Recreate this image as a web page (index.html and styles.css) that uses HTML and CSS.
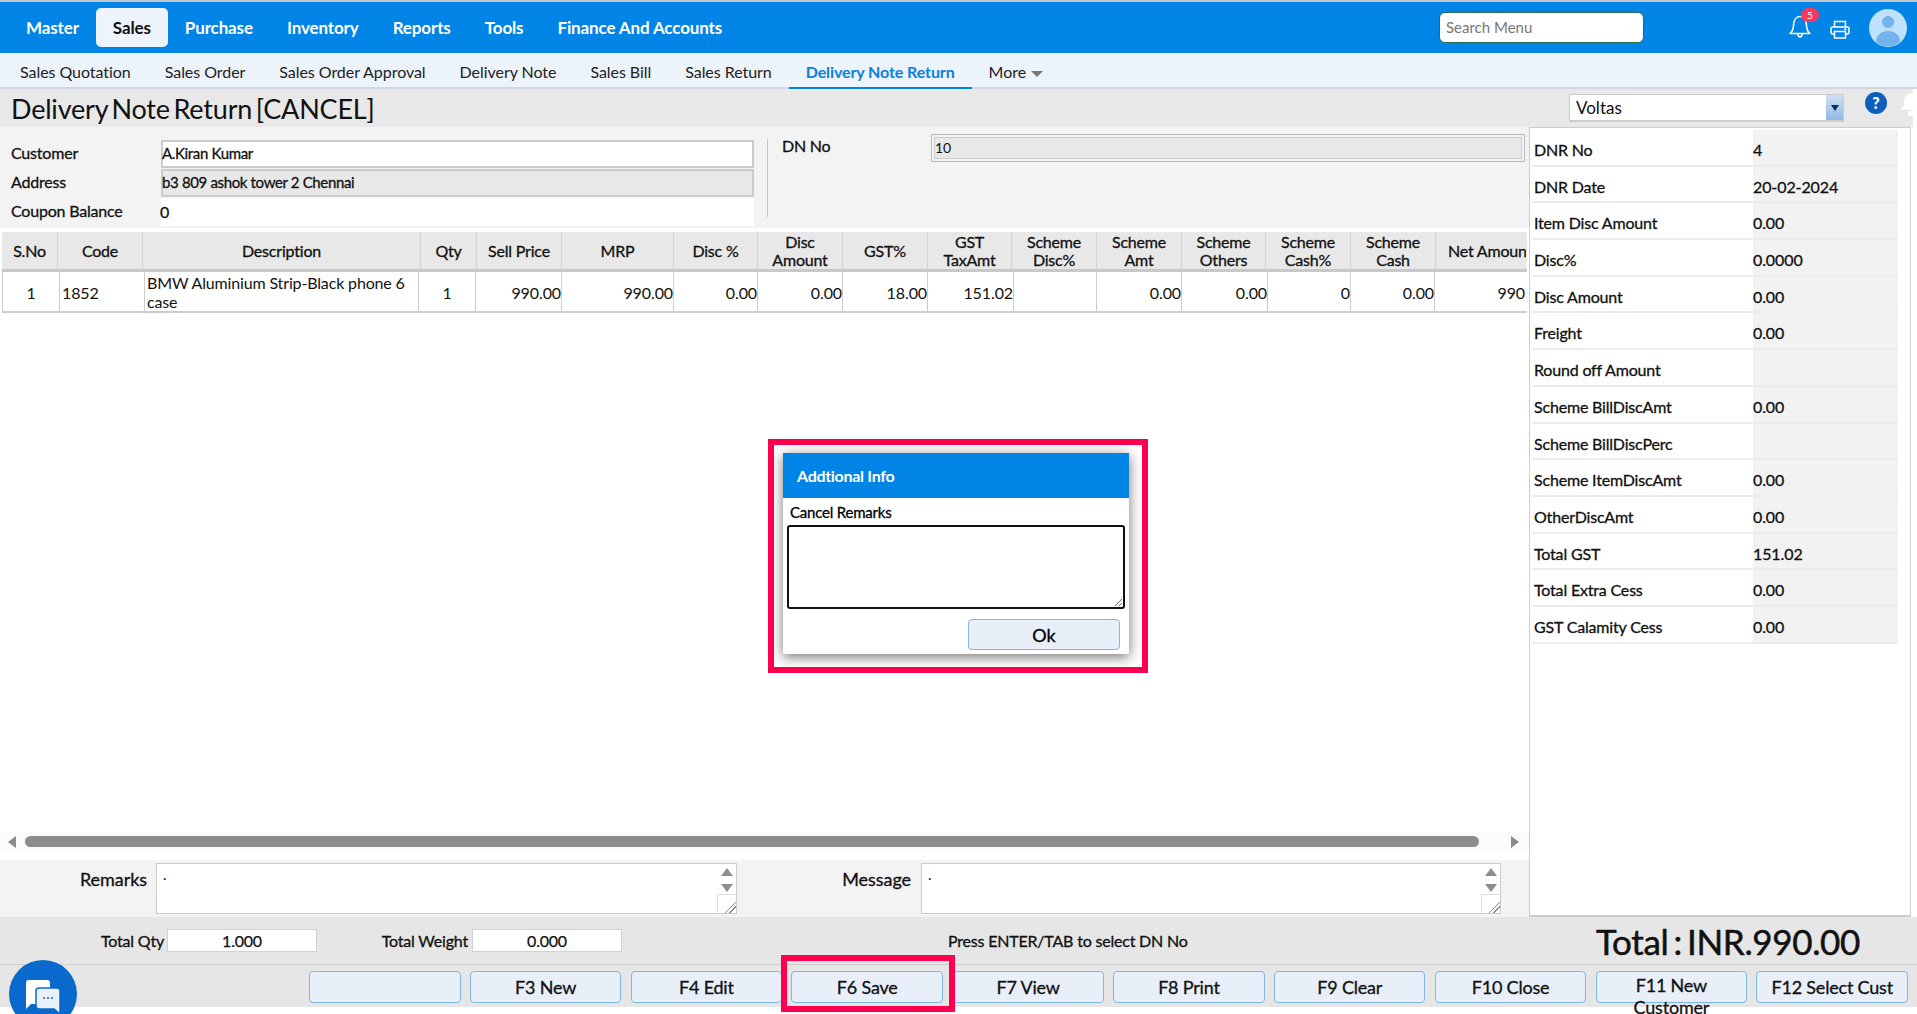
FILE: index.html
```html
<!DOCTYPE html>
<html lang="en">
<head>
<meta charset="utf-8">
<title>Delivery Note Return</title>
<link rel="stylesheet" href="styles.css">
</head>
<body>
<div class="app">
  <header class="topbar">
    <nav class="mainnav">
      <a class="mainlink">Master</a>
      <a class="mainlink mainlink-active">Sales</a>
      <a class="mainlink">Purchase</a>
      <a class="mainlink">Inventory</a>
      <a class="mainlink">Reports</a>
      <a class="mainlink">Tools</a>
      <a class="mainlink">Finance And Accounts</a>
    </nav>
    <input class="searchbox" placeholder="Search Menu">
    <div class="topicons">
      <div class="bellwrap">
        <svg class="bell" width="24" height="26" viewBox="0 0 24 26" fill="none" stroke="#fff" stroke-width="1.6"><path d="M2 20.500c2.500-2 3.300-4 3.500-8 .2-5 2.500-9 6.500-9s6.300 4 6.500 9c.2 4 1 6 3.500 8z" stroke-linejoin="round"/><path d="M9.800 20.800c.2 2.200 1.100 3.200 2.200 3.200s2-1 2.200-3.200"/></svg>
        <span class="badge">5</span>
      </div>
      <svg class="printer" width="20" height="19" viewBox="0 0 20 19" fill="none" stroke="#fff" stroke-width="1.500"><path d="M4.500 7V1.500h11V7"/><rect x="1" y="7" width="18" height="7" rx="1.500"/><rect x="4.500" y="11.500" width="11" height="6.500" fill="#0084e6"/><path d="M14 9.300h2.500"/></svg>
      <svg class="avatar" width="38" height="38" viewBox="0 0 38 38"><circle cx="19" cy="19" r="19" fill="#bfe1fb"/><circle cx="19" cy="13" r="6" fill="#74b2ee"/><path d="M7 33c0-7 5-11 12-11s12 4 12 11a19 19 0 0 1-24 0z" fill="#74b2ee"/></svg>
    </div>
  </header>

  <nav class="subnav">
    <a class="sublink">Sales Quotation</a>
    <a class="sublink">Sales Order</a>
    <a class="sublink">Sales Order Approval</a>
    <a class="sublink">Delivery Note</a>
    <a class="sublink">Sales Bill</a>
    <a class="sublink">Sales Return</a>
    <a class="sublink sublink-active">Delivery Note Return</a>
    <a class="sublink">More <span class="caret"></span></a>
  </nav>

  <div class="titlebar">
    <h1 class="pagetitle">Delivery Note Return [CANCEL]</h1>
    <div class="titletools">
      <div class="companyselect">
        <span class="companyname">Voltas</span>
        <span class="selectarrow"><span class="selecttri"></span></span>
      </div>
      <span class="helpicon">?</span>
      <svg class="ghostbell" width="20" height="24" viewBox="0 0 20 24"><path d="M0 18c3-2 4-4 4-8 0-5 3-9 8-9s8 4 8 9v8z" fill="#fff"/><path d="M8 19h8v3a4 4 0 0 1-8 0z" fill="#fff"/></svg>
    </div>
  </div>

  <div class="workspace">
    <div class="leftcol">
      <section class="formarea">
        <div class="custgrid">
          <label class="flabel">Customer</label>
          <div class="fvalue fvalue-input">A.Kiran Kumar</div>
          <label class="flabel">Address</label>
          <div class="fvalue fvalue-readonly">b3 809 ashok tower 2 Chennai</div>
          <label class="flabel">Coupon Balance</label>
          <div class="fvalue fvalue-plain">0</div>
        </div>
        <div class="dnblock">
          <label class="dnlabel">DN No</label>
          <div class="dninput">10</div>
        </div>
      </section>

      <section class="gridarea">
        <div class="gridhead">
          <div class="hc">S.No</div>
          <div class="hc">Code</div>
          <div class="hc">Description</div>
          <div class="hc">Qty</div>
          <div class="hc">Sell Price</div>
          <div class="hc">MRP</div>
          <div class="hc">Disc %</div>
          <div class="hc">Disc<br>Amount</div>
          <div class="hc">GST%</div>
          <div class="hc">GST<br>TaxAmt</div>
          <div class="hc">Scheme<br>Disc%</div>
          <div class="hc">Scheme<br>Amt</div>
          <div class="hc">Scheme<br>Others</div>
          <div class="hc">Scheme<br>Cash%</div>
          <div class="hc">Scheme<br>Cash</div>
          <div class="hc hc-clip"><span class="nowrap">Net Amount</span></div>
        </div>
        <div class="gridrow">
          <div class="dc dc-center">1</div>
          <div class="dc">1852</div>
          <div class="dc dc-desc">BMW Aluminium Strip-Black phone 6 case</div>
          <div class="dc dc-center">1</div>
          <div class="dc dc-right">990.00</div>
          <div class="dc dc-right">990.00</div>
          <div class="dc dc-right">0.00</div>
          <div class="dc dc-right">0.00</div>
          <div class="dc dc-right">18.00</div>
          <div class="dc dc-right">151.02</div>
          <div class="dc dc-right"></div>
          <div class="dc dc-right">0.00</div>
          <div class="dc dc-right">0.00</div>
          <div class="dc dc-right">0</div>
          <div class="dc dc-right">0.00</div>
          <div class="dc dc-right dc-last">990</div>
        </div>
      </section>

      <div class="hscroll">
        <span class="arrow-left"></span>
        <div class="hthumb"></div>
        <span class="arrow-right"></span>
      </div>

      <section class="notesarea">
        <label class="notelabel notelabel-remarks">Remarks</label>
        <div class="notebox notebox-remarks">
          <span class="notetext">.</span>
          <div class="notescroll">
            <span class="tri-up"></span>
            <span class="tri-down"></span>
            <span class="gripcell"></span>
          </div>
        </div>
        <label class="notelabel notelabel-message">Message</label>
        <div class="notebox notebox-message">
          <span class="notetext">.</span>
          <div class="notescroll">
            <span class="tri-up"></span>
            <span class="tri-down"></span>
            <span class="gripcell"></span>
          </div>
        </div>
      </section>
    </div>

    <aside class="sidepanel">
      <div class="sumtable">
        <div class="sumrow"><span class="sumkey">DNR No</span><span class="sumval">4</span></div>
        <div class="sumrow"><span class="sumkey">DNR Date</span><span class="sumval">20-02-2024</span></div>
        <div class="sumrow"><span class="sumkey">Item Disc Amount</span><span class="sumval">0.00</span></div>
        <div class="sumrow"><span class="sumkey">Disc%</span><span class="sumval">0.0000</span></div>
        <div class="sumrow"><span class="sumkey">Disc Amount</span><span class="sumval">0.00</span></div>
        <div class="sumrow"><span class="sumkey">Freight</span><span class="sumval">0.00</span></div>
        <div class="sumrow"><span class="sumkey">Round off Amount</span><span class="sumval"></span></div>
        <div class="sumrow"><span class="sumkey">Scheme BillDiscAmt</span><span class="sumval">0.00</span></div>
        <div class="sumrow"><span class="sumkey">Scheme BillDiscPerc</span><span class="sumval"></span></div>
        <div class="sumrow"><span class="sumkey">Scheme ItemDiscAmt</span><span class="sumval">0.00</span></div>
        <div class="sumrow"><span class="sumkey">OtherDiscAmt</span><span class="sumval">0.00</span></div>
        <div class="sumrow"><span class="sumkey">Total GST</span><span class="sumval">151.02</span></div>
        <div class="sumrow"><span class="sumkey">Total Extra Cess</span><span class="sumval">0.00</span></div>
        <div class="sumrow"><span class="sumkey">GST Calamity Cess</span><span class="sumval">0.00</span></div>
      </div>
    </aside>
  </div>

  <div class="totalsbar">
    <span class="tlabel tlabel-qty">Total Qty</span>
    <span class="tvalue">1.000</span>
    <span class="tlabel tlabel-weight">Total Weight</span>
    <span class="tvalue">0.000</span>
    <span class="hint">Press ENTER/TAB to select DN No</span>
    <span class="grandtotal">Total : INR.990.00</span>
  </div>

  <div class="actionbar">
    <button class="fbtn"></button>
    <button class="fbtn">F3 New</button>
    <button class="fbtn">F4 Edit</button>
    <button class="fbtn">F6 Save</button>
    <button class="fbtn">F7 View</button>
    <button class="fbtn">F8 Print</button>
    <button class="fbtn">F9 Clear</button>
    <button class="fbtn">F10 Close</button>
    <button class="fbtn fbtn-wrap">F11 New Customer</button>
    <button class="fbtn">F12 Select Cust</button>
  </div>

  <div class="chatbubble">
    <svg width="36" height="34" viewBox="0 0 36 34"><path d="M3 0h19a3 3 0 0 1 3 3v18a3 3 0 0 1-3 3H6l-5 5V3a3 3 0 0 1 2-3z" fill="#fff"/><path d="M14 8h18a3 3 0 0 1 3 3v17l0 6-6-5H14a3 3 0 0 1-3-3V11a3 3 0 0 1 3-3z" fill="#e9f2fb" stroke="#0a69cc" stroke-width="1.500"/><circle cx="19" cy="18" r="1" fill="#0a69cc"/><circle cx="23" cy="18" r="1" fill="#0a69cc"/><circle cx="27" cy="18" r="1" fill="#0a69cc"/></svg>
  </div>

  <div class="modalframe">
    <div class="modal">
      <div class="modalhead">Addtional Info</div>
      <div class="modalbody">
        <label class="modallabel">Cancel Remarks</label>
        <textarea class="modaltext"></textarea>
        <div class="modalfoot"><button class="okbtn">Ok</button></div>
      </div>
    </div>
  </div>

  <div class="savehighlight"></div>
</div>
</body>
</html>
```

FILE: styles.css
```css
* { box-sizing: border-box; }
html, body { margin: 0; padding: 0; background: #fff; }
body { font-family: Lato, "Open Sans", sans-serif; color: #111; font-size: 15px; }
.app { position: relative; width: 1917px; height: 1014px; overflow: hidden; display: flex; flex-direction: column; }

/* top bar */
.topbar { flex: none; height: 53px; background: #0084e6; border-top: 2px solid #c4c8cc; display: flex; align-items: center; padding-left: 9px; }
.mainnav { display: flex; align-items: center; }
.mainlink { color: #fff; font-size: 17px; font-weight: 700; padding: 0 17px; height: 39px; line-height: 39px; border-radius: 5px; letter-spacing: -0.13px; }
.mainlink-active { background: #edf4fb; color: #111; }
.searchbox { margin-left: auto; width: 205px; height: 31px; border: 1px solid #2b6b4e; border-radius: 6px; background: #fff; padding: 0 6px 2px; font: 15px Lato, sans-serif; }
.searchbox::placeholder { color: #777; opacity: 1; }
.topicons { width: 273px; display: flex; align-items: center; position: relative; height: 100%; }
.bellwrap { position: absolute; left: 144px; top: 11px; width: 24px; height: 26px; }
.bell { display: block; }
.badge { position: absolute; left: 13px; top: -5px; width: 18px; height: 14px; border-radius: 7px; background: #f53a5e; color: #fff; font-size: 10px; line-height: 14px; text-align: center; }
.printer { position: absolute; left: 186px; top: 18px; }
.avatar { position: absolute; left: 225px; top: 7px; }

/* sub nav */
.subnav { flex: none; height: 36px; background: #ecf3fb; border-bottom: 2px solid #cfd8e0; display: flex; padding-left: 3px; }
.sublink { height: 36px; line-height: 37px; padding: 0 17px; font-size: 16px; color: #222; letter-spacing: -0.05px; }
.sublink-active { color: #0a7fe0; font-weight: 700; border-bottom: 2px solid #0084e6; letter-spacing: -0.1px; line-height: 35px; padding-top: 1px; }
.caret { display: inline-block; width: 0; height: 0; border-left: 6px solid transparent; border-right: 6px solid transparent; border-top: 6px solid #777; vertical-align: middle; margin-left: 1px; }

/* title bar */
.titlebar { flex: none; height: 38px; background: #e8e8e8; display: flex; align-items: center; justify-content: space-between; padding-left: 11px; margin-right: 4px; }
.pagetitle { margin: 0; font-size: 27px; font-weight: 400; letter-spacing: -0.2px; word-spacing: -3px; color: #111; }
.titletools { display: flex; align-items: center; position: relative; width: 344px; height: 100%; }
.companyselect { width: 275px; height: 28px; background: #fff; border: 1px solid #ccc; border-bottom-width: 2px; display: flex; justify-content: space-between; }
.companyname { font-size: 17px; line-height: 25px; padding-left: 6px; }
.selectarrow { width: 17px; background: linear-gradient(#cfe0f2, #8fb9e6); display: flex; align-items: center; justify-content: center; }
.selecttri { width: 0; height: 0; border-left: 4px solid transparent; border-right: 4px solid transparent; border-top: 6px solid #0b2a6b; }
.helpicon { position: absolute; left: 296px; top: 3px; width: 22px; height: 22px; border-radius: 50%; background: #0d5fbb; color: #fff; font-weight: 900; font-size: 16px; line-height: 22px; text-align: center; }
.ghostbell { position: absolute; left: 331px; top: 3px; }

/* workspace */
.workspace { flex: none; height: 790px; display: flex; }
.leftcol { width: 1529px; display: flex; flex-direction: column; }
.formarea { flex: none; height: 101px; background: #f3f3f3; display: flex; padding: 7px 0 0 11px; }
.custgrid { width: 756px; display: grid; grid-template-columns: 150px 593px; grid-auto-rows: 29px; padding-top: 6px; }
.flabel { font-size: 16px; line-height: 25px; letter-spacing: -0.2px; -webkit-text-stroke: 0.3px currentColor; }
.fvalue { font-size: 15px; line-height: 22px; height: 28px; letter-spacing: -0.35px; -webkit-text-stroke: 0.3px currentColor; text-indent: -1px; }
.fvalue-input { background: #fff; border: 2px solid #ccc; }
.fvalue-readonly { background: #e8e8e8; border: 2px solid #ccc; }
.fvalue-plain { background: #fff; font-size: 16px; line-height: 28px; }
.dnblock { flex: 1; display: flex; border-left: 1px solid #c8c8c8; height: 78px; margin-top: 5px; }
.dnlabel { font-size: 16px; width: 163px; padding-left: 14px; line-height: 14px; letter-spacing: -0.25px; -webkit-text-stroke: 0.3px currentColor; }
.dninput { width: 594px; height: 28px; margin-top: -5px; background: #e8e8e8; border: 1px solid #bbb; box-shadow: inset 0 0 0 2px #f3f3f3, inset 0 0 0 3px #ccc; font-size: 14px; line-height: 26px; padding-left: 3px; }

/* grid */
.gridarea { flex: 1; background: #fff; padding: 4px 0 0 2px; min-height: 0; }
.gridhead, .gridrow { width: 1525px; display: grid; }
.gridhead { grid-template-columns: 56px 85px 278px 56px 85px 112px 84px 85px 85px 84px 85px 85px 84px 85px 85px 90px; height: 40px; background: #e8e8e8; border-bottom: 3px solid #c8c8c8; }
.hc { border-right: 1px solid #d2d2d2; display: flex; align-items: center; justify-content: center; text-align: center; font-size: 16px; line-height: 18px; letter-spacing: -0.2px; -webkit-text-stroke: 0.3px currentColor; min-width: 0; }
.hc:last-child { border-right: 0; }
.hc-clip { overflow: hidden; justify-content: flex-start; padding-left: 12px; }
.nowrap { white-space: nowrap; }
.gridrow { grid-template-columns: 57px 85px 274px 57px 86px 112px 84px 85px 85px 86px 83px 85px 86px 83px 84px 90px; height: 41px; border-bottom: 2px solid #ccc; border-left: 1px solid #ccc; }
.dc { border-right: 1px solid #ccc; font-size: 16px; line-height: 41px; padding: 0 1px; letter-spacing: -0.1px; min-width: 0; }
.dc:nth-child(2) { padding-left: 2px; }
.dc-center { text-align: center; }
.dc-right { text-align: right; padding-right: 0; }
.dc-desc { font-size: 16px; line-height: 19px; padding: 1px 2px 0 2px; letter-spacing: -0.15px; }
.dc-last { border-right: 0; }

/* horizontal scrollbar */
.hscroll { flex: none; height: 19px; margin-bottom: 9px; background: #fbfbfb; display: flex; align-items: center; padding: 0 10px 0 8px; }
.arrow-left { width: 0; height: 0; border-top: 6px solid transparent; border-bottom: 6px solid transparent; border-right: 8px solid #8a8a8a; }
.hthumb { width: 1454px; height: 11px; border-radius: 6px; background: #8c8c8c; margin: 0 32px 0 9px; }
.arrow-right { width: 0; height: 0; border-top: 6px solid transparent; border-bottom: 6px solid transparent; border-left: 8px solid #8a8a8a; }

/* notes */
.notesarea { flex: none; height: 57px; background: #f3f3f3; display: flex; padding-top: 3px; }
.notelabel { font-size: 18px; text-align: right; line-height: 32px; letter-spacing: -0.05px; -webkit-text-stroke: 0.3px currentColor; }
.notelabel-remarks { width: 147px; margin-right: 9px; }
.notelabel-message { width: 174px; margin-right: 10px; }
.notebox { height: 51px; background: #fff; border: 1px solid #ccc; position: relative; padding: 3px 6px; display: flex; justify-content: space-between; }
.notebox-remarks { width: 581px; }
.notebox-message { width: 580px; }
.notetext { font-size: 15px; line-height: 15px; }
.notescroll { position: absolute; right: 0; top: 0; bottom: 0; width: 19px; display: flex; flex-direction: column; align-items: center; padding-top: 4px; }
.tri-up { width: 0; height: 0; border-left: 6px solid transparent; border-right: 6px solid transparent; border-bottom: 8px solid #8e8e8e; }
.tri-down { width: 0; height: 0; border-left: 6px solid transparent; border-right: 6px solid transparent; border-top: 8px solid #8e8e8e; margin-top: 8px; }
.gripcell { margin-top: auto; width: 19px; height: 19px; border-top: 1px solid #ddd; border-left: 1px solid #ddd; background: linear-gradient(135deg, transparent 68%, #888 68%, #888 72%, transparent 72%, transparent 80%, #888 80%, #888 84%, transparent 84%); }

/* side panel */
.sidepanel { width: 382px; height: 790px; background: #fff; border-top: 1px solid #ccc; border-left: 1px solid #ccc; border-right: 1px solid #ccc; border-bottom: 2px solid #ccc; padding: 2px 0 0 2px; }
.sumtable { width: 366px; background: #f2f2f2; }
.sumrow { height: 36.700px; display: flex; }
.sumkey { width: 221px; padding-left: 2px; background: #fff; border-bottom: 2px solid #ececec; font-size: 16px; line-height: 39px; letter-spacing: -0.18px; -webkit-text-stroke: 0.3px currentColor; }
.sumval { flex: 1; border-bottom: 2px solid #ececec; font-size: 16px; line-height: 39px; letter-spacing: -0.1px; -webkit-text-stroke: 0.3px currentColor; }

/* totals */
.totalsbar { flex: none; height: 48px; background: #e6e6e6; border-bottom: 1px solid #cfcfcf; display: flex; align-items: center; }
.tlabel { font-size: 16px; text-align: right; letter-spacing: -0.2px; -webkit-text-stroke: 0.3px currentColor; }
.tlabel-qty { width: 164px; margin-right: 3px; }
.tlabel-weight { width: 151px; margin-right: 4px; }
.tvalue { width: 150px; height: 23px; background: #fff; border: 1px solid #d2d2d2; text-align: center; font-size: 16px; line-height: 22px; letter-spacing: -0.2px; -webkit-text-stroke: 0.25px currentColor; }
.hint { margin-left: 326px; font-size: 16px; letter-spacing: -0.2px; -webkit-text-stroke: 0.3px currentColor; width: 648px; }
.grandtotal { font-size: 35px; letter-spacing: -0.35px; word-spacing: -3.500px; -webkit-text-stroke: 0.5px currentColor; white-space: nowrap; }

/* actions */
.actionbar { flex: none; height: 42px; background: #e6e6e6; display: flex; gap: 9.340px; padding: 6px 0 0 309px; align-items: flex-start; }
.fbtn { flex: none; width: 151.500px; height: 32px; background: #e9eff8; border: 1px solid #7cb6ec; border-radius: 4px; font: 400 18px/22px Lato, sans-serif; color: #111; padding: 0 2px; letter-spacing: -0.2px; -webkit-text-stroke: 0.3px currentColor; cursor: pointer; }
.fbtn-wrap { padding: 2px 30px 0; height: 32px; white-space: normal; text-align: center; }

/* chat */
.chatbubble { position: absolute; left: 9px; top: 960px; width: 68px; height: 68px; border-radius: 50%; background: #0a69cc; padding: 20px 0 0 16px; }
.chatbubble svg { display: block; }

/* modal */
.modalframe { position: absolute; left: 768px; top: 439px; width: 380px; height: 234px; border: 6px solid #ff0050; padding: 8px 9px; }
.modal { width: 346px; height: 201px; background: #fff; box-shadow: 0 3px 12px rgba(0,0,0,.55); }
.modalhead { height: 45px; background: #0084e6; color: #fff; font-size: 16px; font-weight: 700; line-height: 45px; padding-left: 14px; letter-spacing: -0.3px; }
.modalbody { padding: 5px 4px 0; }
.modallabel { display: block; font-size: 15px; line-height: 18px; padding-left: 3px; letter-spacing: -0.2px; color: #000; -webkit-text-stroke: 0.3px currentColor; }
.modaltext { display: block; width: 338px; height: 84px; margin: 4px 0 0; border: 2px solid #111; border-radius: 3px; background: #fff; outline: 0; }
.modalfoot { display: flex; justify-content: flex-end; padding: 10px 5px 0 0; }
.okbtn { width: 152px; height: 31px; background: #e9eff8; border: 1px solid #7cb6ec; border-radius: 4px; font: 400 18px Lato, sans-serif; color: #000; -webkit-text-stroke: 0.3px currentColor; }

/* save highlight */
.savehighlight { position: absolute; left: 781px; top: 955px; width: 174px; height: 57px; border: 6px solid #ff0050; }
```
